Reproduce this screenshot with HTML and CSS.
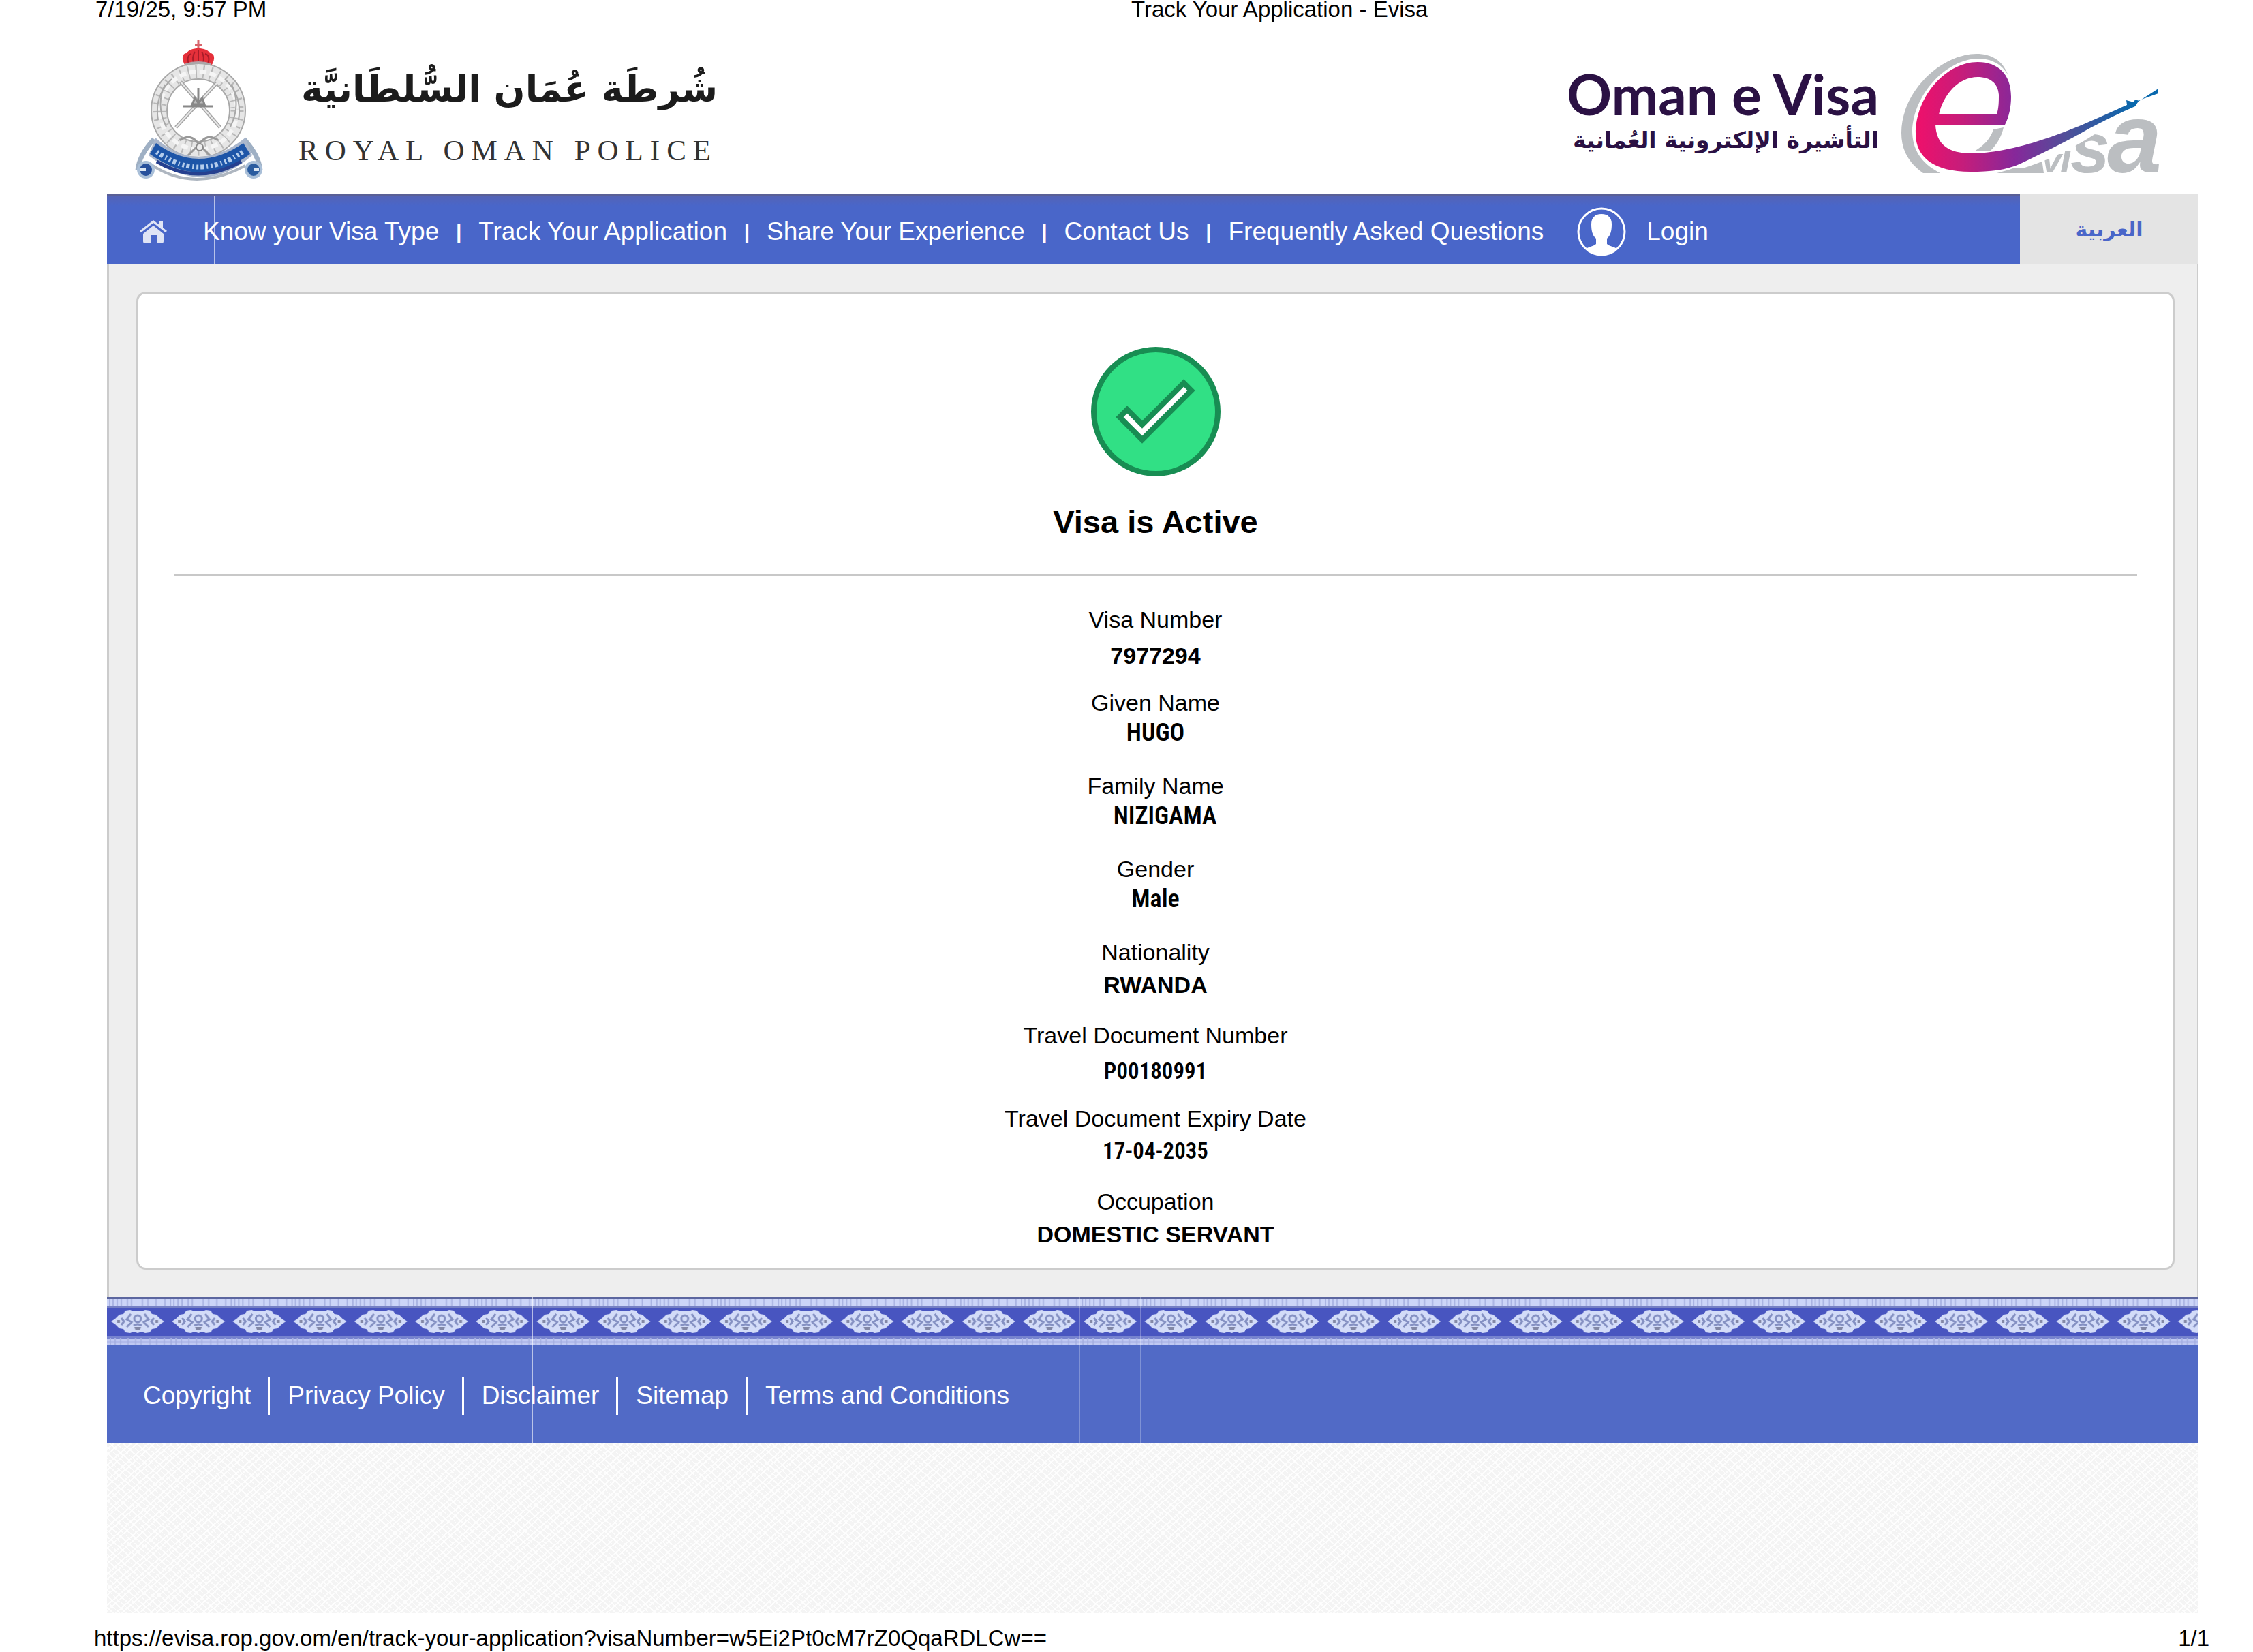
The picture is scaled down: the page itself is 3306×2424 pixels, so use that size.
FILE: index.html
```html
<!DOCTYPE html>
<html lang="en">
<head>
<meta charset="utf-8">
<title>Track Your Application - Evisa</title>
<link rel="stylesheet" href="styles.css">
</head>
<body>
<div class="print-head">
  <span>7/19/25, 9:57 PM</span>
  <span>Track Your Application - Evisa</span>
</div>

<div class="site">
  <header class="brand">
    <div class="police">
      <svg class="emblem" viewBox="0 0 220 230" aria-hidden="true">
        <path d="M111 9v16M106 16h10" stroke="#d8656c" stroke-width="3"/>
        <path d="M91 45c-5-9-4-17 3-17 3-5 9-7 17-7s14 2 17 7c7 0 8 8 3 17z" fill="#e5303a"/>
        <path d="M97 43c-3-7-1-13 4-14M111 24v20M125 43c3-7 1-13-4-14M104 43c-2-8 0-14 2-17M118 43c2-8 0-14-2-17" stroke="#a81c29" stroke-width="2" fill="none"/>
        <path d="M92 43q19-6 38 0l-2 10q-17-5-34 0z" fill="#b3a0a6"/>
        <path d="M96 53q15-4 30 0v6q-15-4-30 0z" fill="#d6d3d5"/>
        <circle cx="111" cy="112" r="57" fill="none" stroke="#e6e6e6" stroke-width="22"/>
        <circle cx="111" cy="112" r="57" fill="none" stroke="#b8b8b8" stroke-width="19" stroke-dasharray="2 9"/>
        <circle cx="111" cy="112" r="57" fill="none" stroke="#f5f5f5" stroke-width="6" stroke-dasharray="10 5"/>
        <g fill="none" stroke="#a8a8a8" stroke-width="2">
          <circle cx="111" cy="112" r="69"/><circle cx="111" cy="112" r="46"/>
          <path d="M72 66q-26 24-20 60M62 74q-14 30 2 62M150 66q26 24 20 60M160 74q14 30-2 62"/>
        </g>
        <path d="M85 70l58 67M138 72l-60 65" stroke="#a5a5a5" stroke-width="5"/>
        <path d="M85 70l58 67M138 72l-60 65" stroke="#e9e9e9" stroke-width="2"/>
        <path d="M111 79v22M102 103l4-9 5 7 6-7 3 9zM89 106h43" stroke="#888" stroke-width="3" fill="#bbb"/>
        <path d="M84 156q16-12 28 6 12-18 28-6M96 178l16-16 16 16" stroke="#999" stroke-width="3" fill="none"/>
        <circle cx="113" cy="166" r="5" fill="#eee" stroke="#888" stroke-width="2"/>
        <path d="M46 154q-22 24-24 46M178 154q22 24 24 46" stroke="#9fb0c4" stroke-width="7" fill="none"/>
        <path d="M48 152q62 56 132 0l10 26q-72 64-152 0z" fill="#a9b6cc"/>
        <path d="M49 160q62 46 128 0l10 16q-72 54-147 0z" fill="#1d55a8"/>
        <path d="M50 173q62 44 126 0" fill="none" stroke="#b4cdec" stroke-width="7" stroke-dasharray="3 3 5 4 2 4"/>
        <path d="M50 187q60 36 124 0" fill="none" stroke="#26408f" stroke-width="5"/>
        <path d="M44 193q62 40 136 0" fill="none" stroke="#aeb6c0" stroke-width="4"/>
        <g stroke="#a9bfd8" stroke-width="4">
          <circle cx="34" cy="199" r="11" fill="#27509c"/><circle cx="192" cy="199" r="11" fill="#2b5c9f"/>
        </g>
        <path d="M34 199h-8M192 199h8" stroke="#dbe6f2" stroke-width="4"/>
      </svg>
      <div class="police-name">
        <span class="police-ar" lang="ar" dir="rtl">شُرطَة عُمَان السُّلطَانيَّة</span>
        <span class="police-en">ROYAL OMAN POLICE</span>
      </div>
    </div>
    <div class="evisa">
      <div class="evisa-name">
        <span class="evisa-en">Oman e Visa</span>
        <span class="evisa-ar" lang="ar" dir="rtl">التأشيرة الإلكترونية العُمانية</span>
      </div>
      <svg class="swirl" viewBox="0 0 377 175" aria-hidden="true">
        <defs>
          <linearGradient id="swirl-fill" gradientUnits="userSpaceOnUse" x1="20" y1="0" x2="340" y2="0">
            <stop offset="0" stop-color="#f0106a"/><stop offset=".22" stop-color="#c51d7b"/>
            <stop offset=".46" stop-color="#86289a"/><stop offset=".7" stop-color="#4f5099"/>
            <stop offset="1" stop-color="#0868ad"/>
          </linearGradient>
        </defs>
        <path d="M157 32C149 10 133 0 110 0 56 1 0 57 0 116c0 24 10 44 32 59h25C28 160 16 139 16 113 18 59 66 8 112 7c20 0 36 8 45 25z" fill="#bbbec1"/>
        <path d="M135 111l15-3c-3 13-9 24-19 34l-24 1c14-8 24-19 28-32zM140 175q36-8 65-28l4 28z" fill="#bbbec1"/>
        <g class="swirl-letters">
          <text x="206" y="174" font-size="52">v</text>
          <text x="233" y="174" font-size="60">i</text>
          <text x="248" y="174" font-size="104">s</text>
          <text x="302" y="174" font-size="144">a</text>
        </g>
        <path d="M377 51L349 69l-6-3-1 6-12-3 1 7C280 108 230 130 178 143l-60 22 60 3c72-22 120-60 170-92l29-17z" fill="#fff"/>
        <path d="M50 104H152C158 92 161 78 161 63 161 30 142 12 112 12 66 12 21 62 21 117c0 35 27 56 80 56 30 0 52-2 74-12 34-16 62-30 91-46 30-17 57-29 77-38l6-9 28-10v-7l-28 18-6-2-2 4-11-3 1 7C290 93 220 128 150 141c-70 13-98 1-100-37zM55 89C62 59 84 34 112 34c18 0 30 9 31 26 0 10 0 19-3 29z" fill="url(#swirl-fill)" fill-rule="evenodd"/>
      </svg>
    </div>
  </header>

  <nav class="nav">
    <div class="nav-bar">
      <a class="home" href="#" aria-label="Home">
        <svg viewBox="0 0 42 36" aria-hidden="true">
          <path d="M2 18L21 3l19 15" fill="none" stroke="#dfe4f5" stroke-width="3"/>
          <path d="M30 3h5v10l-5-4z" fill="#dfe4f5"/>
          <path d="M6 21L21 9l15 12v11q0 3-3 3h-7V23h-8v12H9q-3 0-3-3z" fill="#dfe4f5"/>
        </svg>
      </a>
      <a href="#">Know your Visa Type</a><span class="bar">|</span>
      <a href="#">Track Your Application</a><span class="bar">|</span>
      <a href="#">Share Your Experience</a><span class="bar">|</span>
      <a href="#">Contact Us</a><span class="bar">|</span>
      <a href="#">Frequently Asked Questions</a>
      <a class="login" href="#">
        <svg viewBox="0 0 72 72" aria-hidden="true">
          <circle cx="36" cy="36" r="34" fill="none" stroke="#fff" stroke-width="3"/>
          <path d="M36 10c10 0 15 6 15 15 0 10-2 17-7 21v8c3 3 10 4 15 7-6 6-14 10-23 10s-17-4-23-10c5-3 12-4 15-7v-8c-5-4-7-11-7-21 0-9 5-15 15-15z" fill="#fff"/>
        </svg>
        Login
      </a>
    </div>
    <a class="lang" href="#" lang="ar" dir="rtl">العربية</a>
  </nav>

  <main class="main">
    <section class="card">
      <svg class="tick" viewBox="0 0 190 190" aria-hidden="true">
        <circle cx="95" cy="95" r="91" fill="#31e085" stroke="#188d53" stroke-width="8"/>
        <path d="M42 103l11-11 22 22 61-61 11 11-72 72z" fill="#fff" stroke="#188d53" stroke-width="8"/>
      </svg>
      <h1>Visa is Active</h1>
      <hr>
      <dl class="details">
        <div><dt>Visa Number</dt><dd class="low">7977294</dd></div>
        <div><dt>Given Name</dt><dd class="slim high">HUGO</dd></div>
        <div><dt>Family Name</dt><dd class="slim high shifted">NIZIGAMA</dd></div>
        <div><dt>Gender</dt><dd class="slim high">Male</dd></div>
        <div><dt>Nationality</dt><dd>RWANDA</dd></div>
        <div><dt>Travel Document Number</dt><dd class="slim digits low">P00180991</dd></div>
        <div><dt>Travel Document Expiry Date</dt><dd class="slim digits">17-04-2035</dd></div>
        <div><dt>Occupation</dt><dd>DOMESTIC SERVANT</dd></div>
      </dl>
    </section>
  </main>

  <footer class="footer">
    <svg class="braid" aria-hidden="true">
      <defs>
        <pattern id="braid-tile" patternUnits="userSpaceOnUse" width="89.2" height="71">
          <rect width="90" height="71" fill="#4855c0"/>
          <rect width="90" height="3" fill="#5c669f"/>
          <rect y="3" width="90" height="10" fill="#ccd5f8"/>
          <rect y="13" width="90" height="3" fill="#7580c4"/>
          <rect y="58" width="90" height="3" fill="#7783cf"/>
          <rect y="61" width="90" height="9" fill="#c0c9f3"/>
          <rect y="70" width="90" height="1" fill="#707bc0"/>
          <path d="M4 3v10M9 3v10M15 3v10M21 3v10M30 3v10M36 3v10M52 3v10M60 3v10M72 3v10M85 3v10M5 60v10M12 60v10M20 60v10M31 60v10M42 60v10M50 60v10M63 60v10M73 60v10M84 60v10" stroke="#a9b3e2" stroke-width="2"/>
          <path d="M0 66h90" stroke="#a4aee3" stroke-width="1"/>
          <path d="M6 36l6-4 6-6 6-1 3-5 7-1 5 2 6-1 6 1 5-2 7 1 3 5 6 1 6 6 6 4-6 4-6 6-6 1-3 5-7 1-5-2-6 2-6-2-5 2-7-1-3-5-6-1-6-6z" fill="#d3dcf8"/>
          <g fill="none" stroke="#8490c2" stroke-width="3">
            <circle cx="45" cy="32" r="5"/><path d="M35 25l-6 8 7 4-7 7M55 25l6 8-7 4 7 7M39 42q6-4 12 0M21 31l4 5-4 5M69 31l-4 5 4 5"/>
          </g>
          <path d="M40 44h10l-2 5h-6zM15 34h4v4h-4zM71 34h4v4h-4z" fill="#8388a6"/>
        </pattern>
      </defs>
      <rect width="100%" height="71" fill="url(#braid-tile)"/>
    </svg>
    <ul class="links">
      <li><a href="#">Copyright</a></li>
      <li><a href="#">Privacy Policy</a></li>
      <li><a href="#">Disclaimer</a></li>
      <li><a href="#">Sitemap</a></li>
      <li><a href="#">Terms and Conditions</a></li>
    </ul>
  </footer>
  <div class="weave"></div>
</div>

<div class="print-foot">
  <span>https://evisa.rop.gov.om/en/track-your-application?visaNumber=w5Ei2Pt0cM7rZ0QqaRDLCw==</span>
  <span>1/1</span>
</div>
</body>
</html>
```
FILE: styles.css
```css
* { box-sizing: border-box; }

body {
  margin: 0;
  background: #fff;
  color: #000;
  font-family: "Liberation Sans", Arial, sans-serif;
}

a { color: inherit; text-decoration: none; }

/* Printed page header and footer */
.print-head, .print-foot {
  font-size: 33px;
  white-space: nowrap;
}
.print-head {
  display: grid;
  grid-template-columns: 1520fr 1646fr;
  padding-left: 140px;
  line-height: 28px;
}
.print-foot {
  display: flex;
  justify-content: space-between;
  padding: 18px 64px 0 138px;
  line-height: 38px;
}

.site { margin: 22px 80px 0 157px; }

/* Logos */
.brand {
  display: flex;
  justify-content: space-between;
  padding: 0 59px 0 23px;
  height: 234px;
}
.police { display: flex; gap: 38px; }
.emblem { width: 220px; height: 230px; }
.police-name {
  display: flex;
  flex-direction: column;
  padding-top: 16px;
  white-space: nowrap;
}
.police-ar {
  font: bold 54px/130px "DejaVu Sans", sans-serif;
  color: #1c1c1c;
}
.police-en {
  font: 43px/50px "Liberation Serif", serif;
  letter-spacing: 10px;
  color: #333;
}
.evisa { display: flex; gap: 33px; padding-top: 29px; }
.evisa-name {
  display: flex;
  flex-direction: column;
  padding-top: 16px;
  color: #2b1144;
  white-space: nowrap;
}
.evisa-en { font: bold 82px/84px Lato, sans-serif; }
.evisa-ar { font: bold 33px/54px "DejaVu Sans", sans-serif; }
.swirl { width: 377px; height: 175px; overflow: visible; }
.swirl-letters {
  font-family: "Liberation Sans", sans-serif;
  font-weight: bold;
  font-style: italic;
  fill: #bbbec1;
}

/* Navigation */
.nav { display: flex; min-height: 104px; font-size: 37px; }
.nav-bar {
  flex: 1;
  display: flex;
  align-items: center;
  padding: 4px 0 0 47px;
  border-top: 3px solid #5a6096;
  color: #fff;
  white-space: nowrap;
  background:
    linear-gradient(#fff9, #fff9) 157px 0 / 1px 100% no-repeat,
    linear-gradient(#5563b5, #4966c9 15px);
}
.home { margin-right: 52px; }
.home svg { display: block; width: 42px; height: 36px; }
.bar {
  width: 58px;
  font-size: 30px;
  font-weight: bold;
  text-align: center;
}
.login { display: flex; align-items: center; gap: 30px; margin-left: 49px; }
.login svg { width: 72px; height: 72px; }
.lang {
  display: flex;
  align-items: center;
  justify-content: center;
  width: 262px;
  background: #e4e4e4;
  color: #4966c9;
  font: bold 30px "DejaVu Sans", sans-serif;
}

/* Application status */
.main {
  padding: 40px 33px 40px 40px;
  background: #eee;
  border: solid #ccc;
  border-width: 0 2px 0 3px;
}
.card {
  padding: 78px 52px 11px;
  background: #fff;
  border: 3px solid #ccc;
  border-radius: 14px;
  text-align: center;
}
.tick { display: block; width: 190px; height: 190px; margin: 0 auto; }
h1 { margin: 37px 0 46px; font-size: 47px; line-height: 60px; }
hr { margin: 0 0 44px; border: 0; border-top: 3px solid #c8c8c8; }
.details { display: grid; gap: 16px; margin: 0; font-size: 34px; }
.details > div { min-height: 106px; }
dt { line-height: 40px; }
dd { margin: 0; font-weight: bold; line-height: 56px; }
dd.low { line-height: 66px; }
dd.high { line-height: 48px; }
dd.slim {
  font-family: "Roboto Condensed", Roboto, sans-serif;
  font-size: 36px;
  font-weight: 600;
}
dd.digits { font-size: 33px; }
dd.shifted { padding-left: 28px; }

/* Footer */
.footer { position: relative; background: #516ac6; }
.footer::after {
  content: "";
  position: absolute;
  inset: 0;
  pointer-events: none;
  background:
    linear-gradient(#fff9, #fff9) 89px 0 / 1px 100%,
    linear-gradient(#fff9, #fff9) 268px 0 / 1px 100%,
    linear-gradient(#fff4, #fff4) 535px 0 / 1px 100%,
    linear-gradient(#fff9, #fff9) 624px 0 / 1px 100%,
    linear-gradient(#fff9, #fff9) 981px 0 / 1px 100%,
    linear-gradient(#fff4, #fff4) 1427px 0 / 1px 100%,
    linear-gradient(#fff4, #fff4) 1516px 0 / 1px 100%;
  background-repeat: no-repeat;
}
.braid { display: block; width: 100%; height: 71px; }
.links {
  display: flex;
  align-items: center;
  min-height: 144px;
  margin: 0;
  padding: 4px 27px 0;
  list-style: none;
  color: #fff;
  font-size: 37px;
  line-height: 56px;
}
.links li { padding: 0 25px 0 26px; }
.links li + li { border-left: 3px solid #fff; }

.weave {
  height: 249px;
  background:
    repeating-linear-gradient(42deg, #fff0 0 5px, #fffc 5px 7px, #fff0 7px 12px, #fffc 12px 13px),
    repeating-linear-gradient(-42deg, #fff0 0 4px, #fffc 4px 6px, #fff0 6px 15px, #fffc 15px 17px),
    #f4f4f4;
}
```
